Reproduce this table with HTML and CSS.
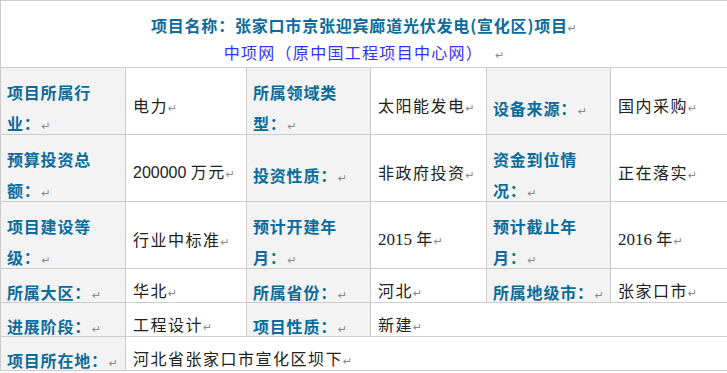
FILE: index.html
```html
<!DOCTYPE html>
<html lang="zh-CN">
<head>
<meta charset="utf-8">
<title>项目信息</title>
<link rel="stylesheet" href="styles.css">
</head>
<body>
<div class="info">
  <div class="cell head">
    <div class="title">项目名称：张家口市京张迎宾廊道光伏发电(宣化区)项目<span class="pm">↵</span></div>
    <div class="sub">中项网（原中国工程项目中心网）<span class="pm sp">↵</span></div>
  </div>

  <div class="cell lab"><div class="lt">项目所属行<br>业：<span class="pm">↵</span></div></div>
  <div class="cell val"><div class="vt">电力<span class="pm">↵</span></div></div>
  <div class="cell lab"><div class="lt">所属领域类<br>型：<span class="pm">↵</span></div></div>
  <div class="cell val"><div class="vt">太阳能发电<span class="pm">↵</span></div></div>
  <div class="cell lab"><div class="lt">设备来源：<span class="pm">↵</span></div></div>
  <div class="cell val"><div class="vt">国内采购<span class="pm">↵</span></div></div>

  <div class="cell lab"><div class="lt">预算投资总<br>额：<span class="pm">↵</span></div></div>
  <div class="cell val"><div class="vt"><span class="num">200000 </span>万元<span class="pm">↵</span></div></div>
  <div class="cell lab"><div class="lt">投资性质：<span class="pm">↵</span></div></div>
  <div class="cell val"><div class="vt">非政府投资<span class="pm">↵</span></div></div>
  <div class="cell lab"><div class="lt">资金到位情<br>况：<span class="pm">↵</span></div></div>
  <div class="cell val"><div class="vt">正在落实<span class="pm">↵</span></div></div>

  <div class="cell lab"><div class="lt">项目建设等<br>级：<span class="pm">↵</span></div></div>
  <div class="cell val"><div class="vt">行业中标准<span class="pm">↵</span></div></div>
  <div class="cell lab"><div class="lt">预计开建年<br>月：<span class="pm">↵</span></div></div>
  <div class="cell val"><div class="vt"><span class="yr">2015 </span>年<span class="pm">↵</span></div></div>
  <div class="cell lab"><div class="lt">预计截止年<br>月：<span class="pm">↵</span></div></div>
  <div class="cell val"><div class="vt"><span class="yr">2016 </span>年<span class="pm">↵</span></div></div>

  <div class="cell lab"><div class="lt">所属大区：<span class="pm">↵</span></div></div>
  <div class="cell val"><div class="vt">华北<span class="pm">↵</span></div></div>
  <div class="cell lab"><div class="lt">所属省份：<span class="pm">↵</span></div></div>
  <div class="cell val"><div class="vt">河北<span class="pm">↵</span></div></div>
  <div class="cell lab"><div class="lt">所属地级市：<span class="pm">↵</span></div></div>
  <div class="cell val"><div class="vt">张家口市<span class="pm">↵</span></div></div>

  <div class="cell lab"><div class="lt">进展阶段：<span class="pm">↵</span></div></div>
  <div class="cell val"><div class="vt">工程设计<span class="pm">↵</span></div></div>
  <div class="cell lab"><div class="lt">项目性质：<span class="pm">↵</span></div></div>
  <div class="cell val span3"><div class="vt">新建<span class="pm">↵</span></div></div>

  <div class="cell lab"><div class="lt">项目所在地：<span class="pm">↵</span></div></div>
  <div class="cell val span5"><div class="vt">河北省张家口市宣化区坝下<span class="pm">↵</span></div></div>
</div>
</body>
</html>
```

FILE: styles.css
```css
html, body {
  margin: 0;
  padding: 0;
  background: #ffffff;
}

body {
  font-family: "Noto Sans CJK SC", "Noto Sans", sans-serif;
  font-size: 16px;
}

.info {
  display: grid;
  grid-template-columns: 125px 121px 124px 116px 124px 117px;
  grid-template-rows: 67px 67px 67px 67px 34px 34px 34px;
  width: 727px;
  border-bottom: 1px solid #cccccc;
}

.cell {
  border-top: 1px solid #cccccc;
  border-left: 1px solid #cccccc;
  min-width: 0;
  min-height: 0;
}

.head {
  grid-column: 1 / -1;
  background: #ffffff;
  padding-top: 11px;
  text-align: center;
}

.title {
  line-height: 27px;
  font-weight: 700;
  color: #0b6b9b;
  letter-spacing: 0.8px;
}

.sub {
  line-height: 27px;
  color: #3333ff;
  letter-spacing: 1.3px;
}

.lab {
  background: #f3f3f3;
  display: flex;
  align-items: center;
  padding-left: 6px;
  padding-right: 1px;
}

.lt {
  line-height: 31px;
  padding-top: 14px;
  font-weight: 700;
  color: #0b6b9b;
  letter-spacing: 0.8px;
  white-space: nowrap;
}

.lt .pm {
  margin-left: 1px;
}

.val {
  background: #ffffff;
  display: flex;
  align-items: center;
  padding-left: 7px;
}

.vt {
  line-height: 22px;
  padding-top: 8px;
  color: #222222;
  letter-spacing: 1.5px;
  white-space: nowrap;
}

.span3 {
  grid-column: span 3;
}

.span5 {
  grid-column: span 5;
}

.num {
  font-family: "Liberation Sans", sans-serif;
  letter-spacing: 0;
}

.yr {
  font-family: "Liberation Serif", serif;
  font-size: 17px;
  letter-spacing: 0;
}

.pm {
  font-family: "DejaVu Sans", sans-serif;
  font-weight: 400;
  font-size: 11px;
  line-height: 1;
  color: #8a8a8a;
  letter-spacing: 0;
}

.sp {
  margin-left: 12px;
}
```
